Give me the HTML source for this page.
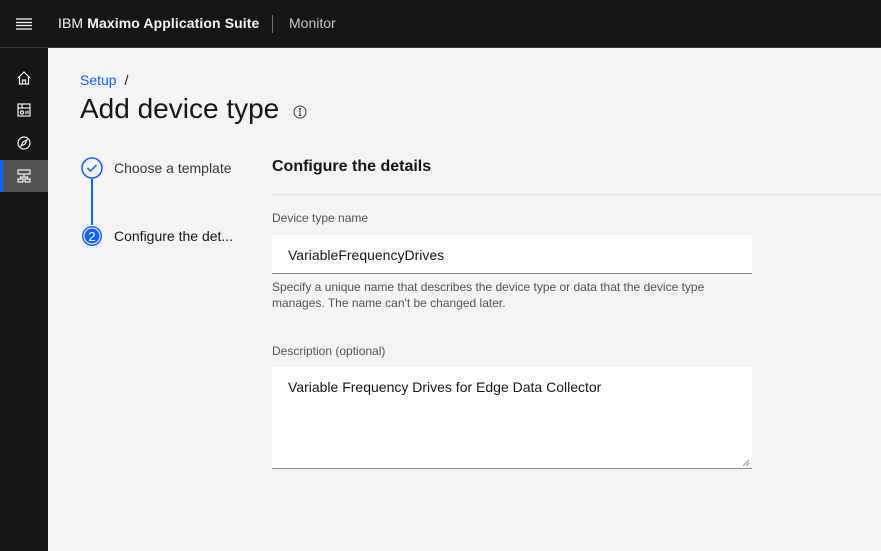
<!DOCTYPE html>
<html><head><meta charset="utf-8"><style>
*{box-sizing:border-box;margin:0;padding:0}
body{width:881px;height:551px;overflow:hidden;background:#f4f4f4;font-family:"Liberation Sans",sans-serif;color:#161616;position:relative}
.top{position:absolute;left:0;top:0;width:881px;height:48px;background:#161616;border-bottom:1px solid #393939}
.side{position:absolute;left:0;top:48px;width:48px;height:503px;background:#161616}
.abs{position:absolute}
.input{position:absolute;background:#fff;border-bottom:1px solid #8d8d8d}
</style></head><body>
<div class="top">
  <svg class="abs" style="left:16px;top:16px" width="16" height="16"><g stroke="#f4f4f4" stroke-width="1.3"><line x1="0" y1="3" x2="16" y2="3"/><line x1="0" y1="6.5" x2="16" y2="6.5"/><line x1="0" y1="9.5" x2="16" y2="9.5"/><line x1="0" y1="13" x2="16" y2="13"/></g></svg>
  <div class="abs" style="left:58px;top:15px;font-size:14px;color:#f4f4f4;letter-spacing:0.1px">IBM <b>Maximo Application Suite</b></div>
  <div class="abs" style="left:272px;top:15px;width:1px;height:18px;background:#6f6f6f"></div>
  <div class="abs" style="left:289px;top:15px;font-size:14px;color:#c6c6c6">Monitor</div>
</div>
<div class="side">
  <svg class="abs" style="left:17px;top:23px" width="14" height="14" fill="none" stroke="#f4f4f4" stroke-width="1.2"><path d="M1 7 L7 1 L13 7 M2.5 5.5 V13 H11.5 V5.5 M5.5 13 V9 H8.5 V13"/></svg>
  <svg class="abs" style="left:17px;top:55px" width="14" height="14" fill="none" stroke="#f4f4f4" stroke-width="1.2"><rect x="1" y="1" width="12" height="12"/><line x1="1" y1="5" x2="13" y2="5"/><line x1="5" y1="1" x2="5" y2="5"/><circle cx="5" cy="9.5" r="1.6"/><line x1="9" y1="8" x2="9" y2="11"/><line x1="11" y1="7.5" x2="11" y2="11"/></svg>
  <svg class="abs" style="left:17px;top:88px" width="14" height="14" fill="none" stroke="#f4f4f4" stroke-width="1.2"><circle cx="7" cy="7" r="6"/><path d="M10 4 L6 6 L4 10 L8 8 Z"/></svg>
  <div class="abs" style="left:0;top:112px;width:48px;height:32px;background:#525252"></div>
  <div class="abs" style="left:0;top:112px;width:3px;height:32px;background:#0f62fe"></div>
  <svg class="abs" style="left:17px;top:121px" width="14" height="14" fill="none" stroke="#f4f4f4" stroke-width="1.2"><rect x="1" y="1" width="12" height="4"/><rect x="1" y="10" width="5" height="3"/><rect x="8" y="10" width="5" height="3"/><path d="M7 5 V8 M3.5 10 V8 H10.5 V10"/></svg>
</div>
<div class="abs" style="left:80px;top:72px;font-size:14px;color:#0f62fe">Setup <span style="color:#161616;margin-left:4px">/</span></div>
<div class="abs" style="left:80px;top:93px;font-size:28px;font-weight:300">Add device type</div>
<svg class="abs" style="left:293px;top:105px" width="14" height="14" fill="none" stroke="#393939" stroke-width="1"><circle cx="7" cy="7" r="6"/><path d="M7 6 V10.5 M5.5 10.5 H8.5 M5.8 6 H7"/><circle cx="7" cy="4" r="0.6" fill="#393939"/></svg>
<svg class="abs" style="left:80px;top:156px" width="24" height="92" fill="none"><circle cx="12" cy="12" r="10" stroke="#0f62fe" stroke-width="1.5"/><path d="M7.5 12 L10.5 15 L16.5 9" stroke="#0f62fe" stroke-width="1.5"/><line x1="12" y1="23" x2="12" y2="69" stroke="#0f62fe" stroke-width="2"/><circle cx="12" cy="80" r="10" fill="#0f62fe"/><circle cx="12" cy="80" r="8" fill="none" stroke="#fff" stroke-width="1"/><text x="12" y="85" text-anchor="middle" font-size="13" fill="#fff" font-family="Liberation Sans">2</text></svg>
<div class="abs" style="left:114px;top:160px;font-size:14px;color:#393939">Choose a template</div>
<div class="abs" style="left:114px;top:228px;font-size:14px;color:#161616">Configure the det...</div>
<div class="abs" style="left:272px;top:158px;font-size:16px;font-weight:bold">Configure the details</div>
<div class="abs" style="left:272px;top:194px;width:609px;height:1px;background:#e0e0e0"></div>
<div class="abs" style="left:272px;top:211px;font-size:12px;color:#525252">Device type name</div>
<div class="input" style="left:272px;top:235px;width:480px;height:39px"></div>
<div class="abs" style="left:288px;top:247px;font-size:14px">VariableFrequencyDrives</div>
<div class="abs" style="left:272px;top:279px;font-size:12px;color:#525252;line-height:16px;width:480px">Specify a unique name that describes the device type or data that the device type manages. The name can't be changed later.</div>
<div class="abs" style="left:272px;top:344px;font-size:12px;color:#525252">Description (optional)</div>
<div class="input" style="left:272px;top:367px;width:480px;height:102px"></div>
<svg class="abs" style="left:742px;top:459px" width="8" height="8" stroke="#8d8d8d"><line x1="1" y1="7" x2="7" y2="1"/><line x1="4" y1="7" x2="7" y2="4"/></svg>
<div class="abs" style="left:288px;top:379px;font-size:14px">Variable Frequency Drives for Edge Data Collector</div>
</body></html>
